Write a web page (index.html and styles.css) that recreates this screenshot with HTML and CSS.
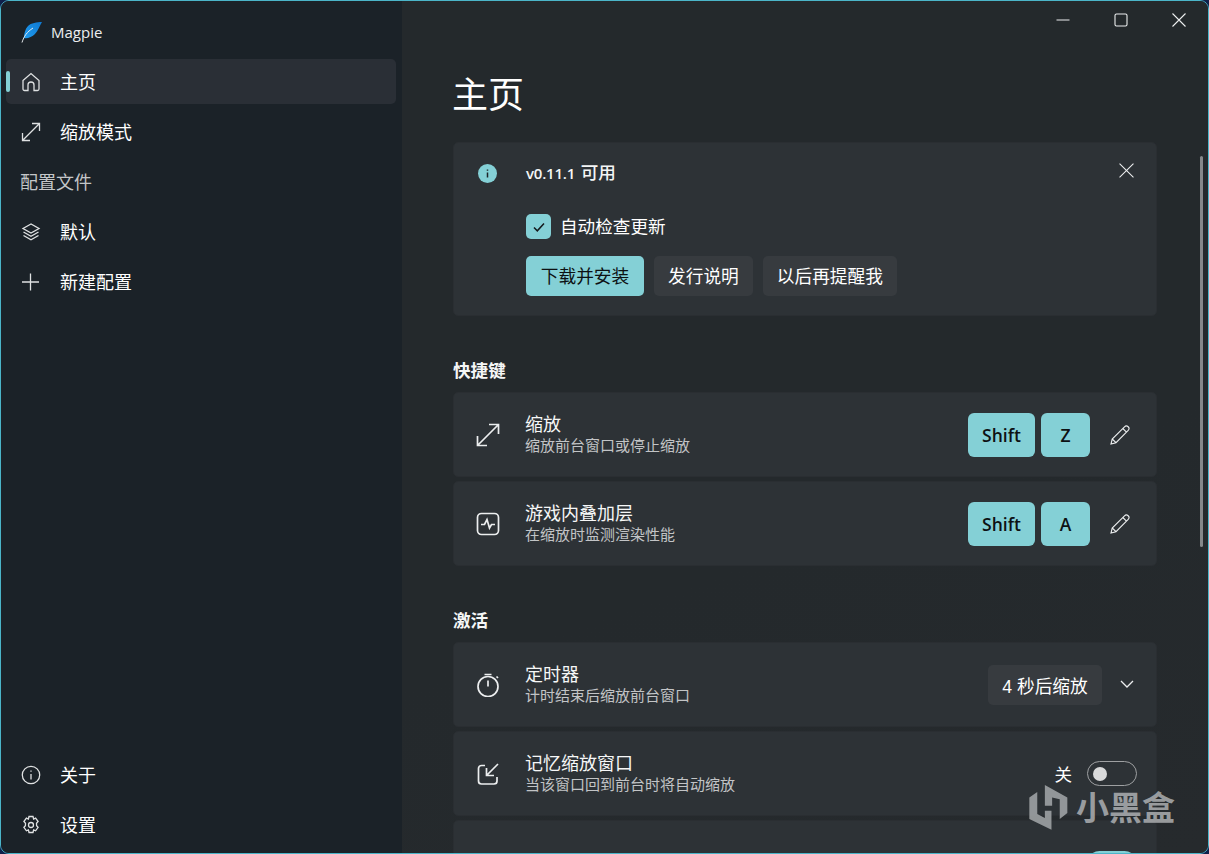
FILE: index.html
```html
<!DOCTYPE html>
<html lang="zh-CN">
<head>
  <meta charset="UTF-8">
  <title>Magpie</title>
  <link rel="stylesheet" href="styles.css">
</head>
<body>
  <div class="window">
    <aside class="sidebar">
      <div class="app-title">
        <svg class="logo" width="22" height="22" viewBox="0 0 22 22">
          <defs>
            <linearGradient id="pluma" x1="1" y1="0" x2="0" y2="1">
              <stop offset="0" stop-color="#0f78cf"/>
              <stop offset="1" stop-color="#1f9cf0"/>
            </linearGradient>
          </defs>
          <path d="M21 1 C16 1 10 2 7 5 C4 8 3 13 3 17 C6 18 11 16 14 13 C17 10 19 4 21 1Z" fill="url(#pluma)"/>
          <path d="M1 21.500 C3 15 6 11 12 7" fill="none" stroke="#e6ebee" stroke-width="1"/>
        </svg>
        <span>Magpie</span>
      </div>

      <nav class="nav-list">
        <a class="nav-item active">
          <svg class="nav-icon" viewBox="0 0 20 20"><path d="M2 8.500 10 1.500l8 7V17a1.500 1.500 0 0 1-1.500 1.500H13V13a3 3 0 0 0-6 0v5.500H3.500A1.500 1.500 0 0 1 2 17Z"/></svg>
          <span class="nav-text">主页</span>
        </a>
        <a class="nav-item">
          <svg class="nav-icon" viewBox="0 0 20 20"><path d="M11 1.500h7.500V9M18.500 1.500 1.500 18.500M1.500 11v7.500H9"/></svg>
          <span class="nav-text">缩放模式</span>
        </a>
        <div class="nav-head">配置文件</div>
        <a class="nav-item">
          <svg class="nav-icon" viewBox="0 0 20 20"><path d="M10 2 2 6.500 10 11l8-4.500ZM2.500 10 10 14.300 17.500 10M2.500 13.500 10 17.800l7.500-4.300"/></svg>
          <span class="nav-text">默认</span>
        </a>
        <a class="nav-item">
          <svg class="nav-icon" viewBox="0 0 20 20"><path d="M9.500 1.500v17M1 10h17"/></svg>
          <span class="nav-text">新建配置</span>
        </a>
      </nav>

      <nav class="nav-list nav-bottom">
        <a class="nav-item">
          <svg class="nav-icon" viewBox="0 0 20 20"><circle cx="10" cy="10" r="8.700"/><path d="M10 9v5.500M10 5.500v1.200"/></svg>
          <span class="nav-text">关于</span>
        </a>
        <a class="nav-item">
          <svg class="nav-icon" viewBox="0 0 20 20"><path d="M8 1.500h4l.6 2.500 2-.9 2.500 3.400-1.600 1.800.1 2.400 1.500 1.600-2.500 3.500-2-.9-.6 2.600H8l-.6-2.600-2 .9-2.500-3.500 1.500-1.600.1-2.400-1.600-1.800 2.500-3.400 2 .9Z"/><circle cx="10" cy="10" r="2.500"/></svg>
          <span class="nav-text">设置</span>
        </a>
      </nav>
    </aside>

    <main class="content">
      <div class="caption-btns">
        <svg class="caption-icon" viewBox="0 0 14 14"><path d="M0.500 7h13"/></svg>
        <svg class="caption-icon" viewBox="0 0 14 14"><rect x="1" y="1" width="12" height="12" rx="1.500"/></svg>
        <svg class="caption-icon" viewBox="0 0 14 14"><path d="M0.500 0.500l13 13M13.500 0.500l-13 13"/></svg>
      </div>

      <h1 class="page-title">主页</h1>

      <section class="card update-card">
        <div class="update-head">
          <svg class="info-icon" width="19" height="19" viewBox="0 0 19 19">
            <circle cx="9.500" cy="9.500" r="9.500" fill="#84d0d6"/>
            <path d="M9.500 8.500v5M9.500 5.500v1.300" stroke="#1d2327" stroke-width="1.500" fill="none"/>
          </svg>
          <strong>v0.11.1 <span class="update-cjk">可用</span></strong>
          <svg class="dismiss" viewBox="0 0 14 14"><path d="M0.500 0.500l13 13M13.500 0.500l-13 13"/></svg>
        </div>
        <div class="update-body">
          <label class="check-row">
            <span class="checkbox">
              <svg width="14" height="14" viewBox="0 0 14 14"><path d="M2 7.500l3.300 3.300L12 3.500"/></svg>
            </span>
            <span class="check-text">自动检查更新</span>
          </label>
          <div class="btn-row">
            <button class="btn btn-accent">下载并安装</button>
            <button class="btn">发行说明</button>
            <button class="btn">以后再提醒我</button>
          </div>
        </div>
      </section>

      <h2 class="section-head">快捷键</h2>
      <div class="card-list">
        <section class="card row-card">
          <svg class="row-icon" viewBox="0 0 24 24"><path d="M13 1.500h9.500V11M22.500 1.500 1.500 22.500M1.500 13v9.500H11"/></svg>
          <div class="row-text">
            <div class="row-title">缩放</div>
            <div class="row-desc">缩放前台窗口或停止缩放</div>
          </div>
          <div class="row-actions">
            <span class="key key-wide">Shift</span>
            <span class="key">Z</span>
            <svg class="edit-icon" viewBox="0 0 20 20"><path d="M1 19l1.200-5L14.500 1.800a2.400 2.400 0 0 1 3.700 3.600L6 17.700ZM2.200 14 6 17.700M12.800 3.500l3.700 3.700"/></svg>
          </div>
        </section>
        <section class="card row-card">
          <svg class="row-icon" viewBox="0 0 24 24"><rect x="1.500" y="1.500" width="21" height="21" rx="4"/><path d="M5 12.500h3.500L11 7.500l2.500 8.500 2-3.500H19"/></svg>
          <div class="row-text">
            <div class="row-title">游戏内叠加层</div>
            <div class="row-desc">在缩放时监测渲染性能</div>
          </div>
          <div class="row-actions">
            <span class="key key-wide">Shift</span>
            <span class="key">A</span>
            <svg class="edit-icon" viewBox="0 0 20 20"><path d="M1 19l1.200-5L14.500 1.800a2.400 2.400 0 0 1 3.700 3.600L6 17.700ZM2.200 14 6 17.700M12.800 3.500l3.700 3.700"/></svg>
          </div>
        </section>
      </div>

      <h2 class="section-head">激活</h2>
      <div class="card-list">
        <section class="card row-card">
          <svg class="row-icon" viewBox="0 0 24 24"><circle cx="12" cy="13.500" r="10"/><path d="M8.500 1.500h7M12 7.500v6M20.500 3.500l1.500 1.500"/></svg>
          <div class="row-text">
            <div class="row-title">定时器</div>
            <div class="row-desc">计时结束后缩放前台窗口</div>
          </div>
          <div class="row-actions">
            <button class="btn btn-combo">4 秒后缩放</button>
            <svg class="chevron" viewBox="0 0 14 8"><path d="M1 1l6 6 6-6"/></svg>
          </div>
        </section>
        <section class="card row-card">
          <svg class="row-icon" viewBox="0 0 24 24"><path d="M9 3.500H5.500a3 3 0 0 0-3 3V19a3 3 0 0 0 3 3H18a3 3 0 0 0 3-3v-4M22 2 10.500 13.500M10.500 6v7.500H18"/></svg>
          <div class="row-text">
            <div class="row-title">记忆缩放窗口</div>
            <div class="row-desc">当该窗口回到前台时将自动缩放</div>
          </div>
          <div class="row-actions">
            <span class="toggle-label">关</span>
            <span class="toggle"><span class="toggle-knob"></span></span>
          </div>
        </section>
        <section class="card row-card">
          <div class="row-actions row-peek">
            <span class="toggle toggle-on"></span>
          </div>
        </section>
      </div>

      <div class="scroll-thumb"></div>
    </main>

    <div class="watermark">
      <svg width="39" height="47" viewBox="12 20 118 140">
        <path d="M37 43 13 60v65l67 32v-57H60v22l-23-12ZM60 22l68 38v47l-23 18V65l-23-5v25H60Z" fill="#a5a8aa" fill-opacity=".85"/>
      </svg>
      <span class="watermark-text">小黑盒</span>
    </div>
  </div>
</body>
</html>
```

FILE: styles.css
```css
* {
  box-sizing: border-box;
}
html, body {
  height: 100%;
}
body {
  margin: 0;
  overflow: hidden;
  background-color: #10204a;
  font-family: "Liberation Sans", "Noto Sans CJK SC", sans-serif;
  color: #fff;
}
svg {
  flex-shrink: 0;
}

.window {
  position: relative;
  display: flex;
  height: 100vh;
  border: 1px solid #4bb5c9;
  border-radius: 9px;
  overflow: hidden;
}

/* barra lateral */
.sidebar {
  width: 401px;
  flex-shrink: 0;
  display: flex;
  flex-direction: column;
  padding: 0 6px 6px 5px;
  background-color: #1b2228;
}
.app-title {
  height: 58px;
  display: flex;
  align-items: center;
  gap: 8px;
  padding: 4px 0 0 15px;
  font-family: "Open Sans", sans-serif;
  font-size: 15px;
  color: #eceeef;
}
.nav-list {
  display: flex;
  flex-direction: column;
  gap: 5px;
}
.nav-bottom {
  margin-top: auto;
}
.nav-item {
  position: relative;
  height: 45px;
  display: flex;
  align-items: center;
  gap: 19px;
  padding-left: 15px;
  border-radius: 5px;
  font-size: 18px;
  color: #fff;
}
.nav-item.active {
  background-color: #2a2f36;
}
.nav-item.active::before {
  content: "";
  position: absolute;
  left: 0;
  top: 12px;
  width: 4px;
  height: 21px;
  border-radius: 2px;
  background-color: #84d0d6;
}
.nav-text {
  padding-bottom: 2px;
}
.nav-icon {
  width: 20px;
  height: 20px;
  fill: none;
  stroke: #dfe1e2;
  stroke-width: 1.300;
}
.nav-head {
  height: 45px;
  display: flex;
  align-items: center;
  padding: 0 0 2px 14px;
  font-size: 18px;
  color: #c4c6c8;
}

/* contenido */
.content {
  position: relative;
  flex: 1;
  min-width: 0;
  padding: 71px 51px 0;
  overflow: hidden;
  background: linear-gradient(160deg, #24292c 0%, #24292c 60%, #262a2d 100%);
}
.caption-btns {
  position: absolute;
  top: 12px;
  right: 22px;
  display: flex;
  gap: 44px;
}
.caption-icon {
  width: 14px;
  height: 14px;
  fill: none;
  stroke: #eceeef;
  stroke-width: 1.100;
}
.page-title {
  margin: 0 0 22px -1px;
  font-size: 36px;
  font-weight: 400;
  line-height: 48px;
  color: #fff;
}
.card {
  background-color: #2d3236;
  border: 1px solid #2a2e32;
  border-radius: 5px;
}
.update-card {
  height: 174px;
  padding: 18px 22px 0 24px;
}
.update-head {
  display: flex;
  align-items: center;
  height: 24px;
  font-size: 15px;
}
.update-head strong {
  margin-left: 29px;
  padding-bottom: 4px;
  font-family: "Open Sans", "Noto Sans CJK SC", sans-serif;
  font-weight: 600;
  letter-spacing: -0.200px;
  color: #f4f5f5;
}
.update-cjk {
  margin-left: 2px;
  font-size: 17.600px;
  font-weight: 500;
}
.dismiss {
  width: 15px;
  height: 15px;
  margin: -6px 0 0 auto;
  fill: none;
  stroke: #eceeef;
  stroke-width: 1;
}
.update-body {
  padding: 29px 0 0 48px;
}
.check-row {
  height: 25px;
  display: flex;
  align-items: center;
  gap: 9px;
  font-size: 17.600px;
}
.check-text {
  padding-bottom: 2px;
}
.checkbox {
  width: 25px;
  height: 25px;
  display: flex;
  align-items: center;
  justify-content: center;
  border-radius: 5px;
  background-color: #84d0d6;
}
.checkbox svg {
  fill: none;
  stroke: #14191c;
  stroke-width: 1.500;
}
.btn-row {
  display: flex;
  gap: 10px;
  margin-top: 17px;
}
.btn {
  height: 40px;
  padding: 0 14px 2px;
  border: none;
  border-radius: 5px;
  background-color: #373b3f;
  color: #fff;
  font-family: "Liberation Sans", "Noto Sans CJK SC", sans-serif;
  font-size: 17.700px;
}
.btn-accent {
  width: 118px;
  background-color: #84d0d6;
  color: #0d1113;
}
.btn-combo {
  width: 114px;
  padding: 0;
}

.section-head {
  margin: 43px 0 9px;
  font-size: 17.600px;
  font-weight: 700;
  line-height: 24px;
  color: #f5f6f6;
}
.card-list {
  display: flex;
  flex-direction: column;
  gap: 4px;
}
.row-card {
  height: 85px;
  flex-shrink: 0;
  display: flex;
  align-items: center;
  padding: 0 19px 0 22px;
}
.row-icon {
  width: 24px;
  height: 24px;
  fill: none;
  stroke: #eceeef;
  stroke-width: 1.700;
}
.row-text {
  margin-left: 25px;
  padding-top: 1px;
}
.row-title {
  font-size: 18px;
  line-height: 22px;
  color: #f6f7f7;
}
.row-desc {
  font-size: 15px;
  line-height: 20px;
  color: #c2c4c6;
}
.row-actions {
  margin-left: auto;
  display: flex;
  align-items: center;
}
.row-peek {
  align-self: flex-start;
  margin-top: 30px;
}
.key {
  width: 49px;
  height: 44px;
  margin-left: 6px;
  display: flex;
  align-items: center;
  justify-content: center;
  border-radius: 6px;
  background-color: #84d0d6;
  color: #0d1113;
  font-family: "Open Sans", sans-serif;
  font-size: 17.500px;
  font-weight: 600;
}
.key-wide {
  width: 67px;
}
.edit-icon {
  width: 20px;
  height: 20px;
  margin: 0 7px 0 20px;
  fill: none;
  stroke: #eceeef;
  stroke-width: 1.100;
}
.chevron {
  width: 14px;
  height: 8px;
  margin: -2px 3px 0 18px;
  fill: none;
  stroke: #eceeef;
  stroke-width: 1.300;
}
.toggle-label {
  margin-right: 15px;
  font-size: 17.600px;
}
.toggle {
  width: 50px;
  height: 25px;
  padding: 5px;
  border: 1px solid #9ea0a2;
  border-radius: 13px;
}
.toggle-knob {
  display: block;
  width: 14px;
  height: 14px;
  border-radius: 50%;
  background-color: #d9dadb;
}
.toggle-on {
  border: none;
  background-color: #84d0d6;
}
.scroll-thumb {
  position: absolute;
  top: 155px;
  right: 5px;
  width: 3px;
  height: 391px;
  border-radius: 2px;
  background-color: #85888a;
}

/* marca de agua */
.watermark {
  position: absolute;
  right: 33px;
  bottom: 21px;
  display: flex;
  align-items: center;
  gap: 8px;
  font-size: 33px;
  font-weight: 700;
  line-height: 46px;
  color: rgba(190, 192, 194, 0.75);
}
.watermark-text {
  padding-top: 3px;
}
```
